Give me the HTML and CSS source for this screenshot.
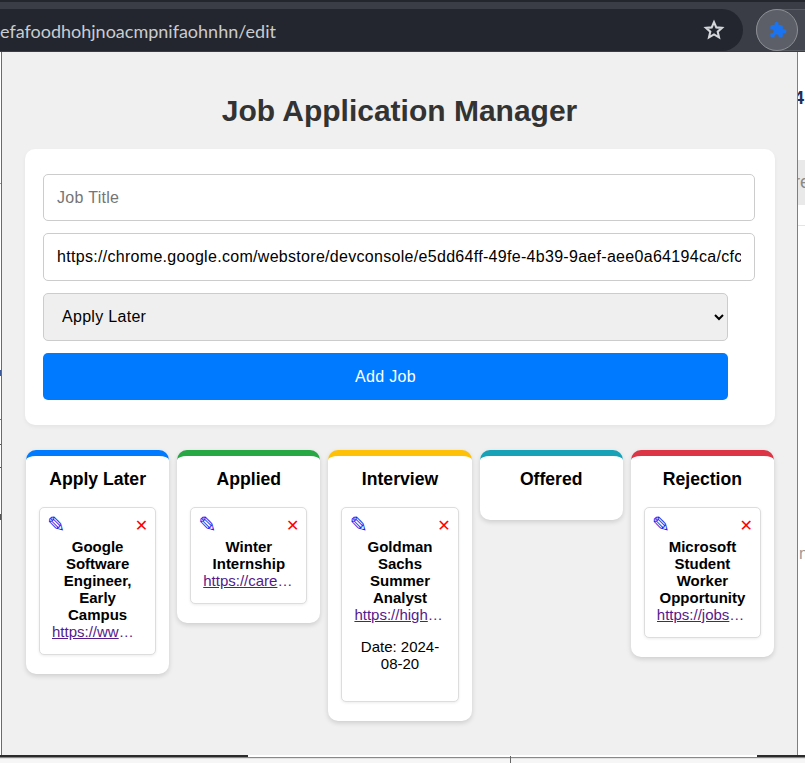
FILE: index.html
```html
<!DOCTYPE html>
<html lang="en">
<head>
<meta charset="utf-8">
<title>Job Application Manager</title>
<link rel="stylesheet" href="styles.css">
</head>
<body>
<header class="browser">
  <div class="tabstrip"></div>
  <div class="toolbar">
    <div class="omnibox">
      <span class="url">efafoodhohjnoacmpnifaohnhn/edit</span>
      <svg class="star" viewBox="0 0 24 24" width="24" height="24"><path d="M12 4.200l2.300 5.200 5.700.5-4.300 3.800 1.300 5.600L12 16.400l-5 2.900 1.300-5.600L4 9.900l5.700-.5z" fill="none" stroke="#d4d6da" stroke-width="2.100"/></svg>
    </div>
    <div class="ext-pill">
      <div class="ext-button">
        <svg viewBox="0 0 24 24" width="20" height="20"><path d="M21 11h-2V8a2 2 0 0 0-2-2h-3V4.500a2.500 2.500 0 0 0-5 0V6H6a2 2 0 0 0-2 2v3h1.500a2.500 2.500 0 0 1 0 5H4v3a2 2 0 0 0 2 2h3v-1.500a2.500 2.500 0 0 1 5 0V21h3a2 2 0 0 0 2-2v-3h2a2.500 2.500 0 0 0 0-5z" fill="#1a73f0"/></svg>
      </div>
    </div>
  </div>
</header>
<div class="page-bg">
  <div class="bg-left"></div>
  <span class="bg-four">4</span>
  <div class="bg-bar">re</div>
  <div class="bg-sep"></div>
  <span class="bg-n">n</span>
  <div class="bg-dark bg-dark-left"></div>
  <div class="bg-dark bg-dark-right"></div>
  <div class="bg-bottom"></div>
  <div class="bg-tick"></div>
</div>
<main class="popup">
  <h1 class="title">Job Application Manager</h1>
  <form class="form-card">
    <input class="field" type="text" placeholder="Job Title">
    <input class="field" type="text" value="https://chrome.google.com/webstore/devconsole/e5dd64ff-49fe-4b39-9aef-aee0a64194ca/cfcefafoodhohjnoacmpnifaohnhn/edit">
    <select class="status">
      <option>Apply Later</option>
      <option>Applied</option>
      <option>Interview</option>
      <option>Offered</option>
      <option>Rejection</option>
    </select>
    <button class="add" type="button">Add Job</button>
  </form>
  <section class="board">
    <div class="column later">
      <h2>Apply Later</h2>
      <article class="job">
        <div class="job-actions"><span class="edit">✎</span><span class="remove">✕</span></div>
        <strong>Google Software Engineer, Early Campus</strong>
        <a class="link" href="#">https://www.google.com/careers</a>
      </article>
    </div>
    <div class="column applied">
      <h2>Applied</h2>
      <article class="job">
        <div class="job-actions"><span class="edit">✎</span><span class="remove">✕</span></div>
        <strong>Winter Internship</strong>
        <a class="link" href="#">https://careers.example.com/winter</a>
      </article>
    </div>
    <div class="column interview">
      <h2>Interview</h2>
      <article class="job">
        <div class="job-actions"><span class="edit">✎</span><span class="remove">✕</span></div>
        <strong>Goldman Sachs Summer Analyst</strong>
        <a class="link" href="#">https://higher.gs.com/roles/summer</a>
        <p class="date">Date: 2024-08-20</p>
      </article>
    </div>
    <div class="column offered">
      <h2>Offered</h2>
    </div>
    <div class="column rejection">
      <h2>Rejection</h2>
      <article class="job">
        <div class="job-actions"><span class="edit">✎</span><span class="remove">✕</span></div>
        <strong>Microsoft Student Worker Opportunity</strong>
        <a class="link" href="#">https://jobs.careers.microsoft.com</a>
      </article>
    </div>
  </section>
</main>
</body>
</html>
```
FILE: styles.css
```css
* { box-sizing: border-box; }
html, body { margin: 0; height: 100%; }
body {
  position: relative;
  width: 805px;
  height: 763px;
  overflow: hidden;
  background: #fff;
  font-family: "Liberation Sans", Arial, sans-serif;
  color: #000;
}
.browser { background: #3a3d45; height: 52px; }
.tabstrip { height: 9px; background: #3a3d45; border-top: 2px solid #23262d; }
.toolbar { display: flex; align-items: flex-start; height: 43px; }
.omnibox {
  flex: none;
  width: 743px;
  height: 42px;
  display: flex;
  align-items: center;
  justify-content: space-between;
  padding-right: 17px;
  background: #23262e;
  border-radius: 0 21px 21px 0;
}
.url {
  position: relative;
  top: 1px;
  font-family: "Lato", "Noto Sans", sans-serif;
  font-size: 18px;
  color: #c9ccd0;
  white-space: nowrap;
}
.star { display: block; }
.ext-pill {
  flex: 1;
  height: 42px;
  margin-left: 13px;
  background: #44474f;
  border: 1px solid #595c63;
  border-right: 0;
  border-radius: 21px 0 0 21px;
}
.ext-button {
  width: 42px;
  height: 42px;
  margin: -1px 0 0 -1px;
  border-radius: 50%;
  background: #5c5f68;
  border: 1px solid #8d8f94;
  display: flex;
  align-items: center;
  justify-content: center;
}
.page-bg {
  position: absolute;
  inset: 52px 0 0 0;
  background: #fff;
}
.bg-left {
  position: absolute;
  left: 0;
  top: 0;
  width: 1px;
  height: 704px;
  background: linear-gradient(to bottom,
    #fff 0 131px, #999 131px 132px, #fff 132px 318px,
    #3b5a9a 318px 324px, #fff 324px 367px,
    #777 367px 368px, #fff 368px 392px,
    #555 392px 393px, #fff 393px 415px,
    #555 415px 416px, #fff 416px 462px,
    #555 462px 468px, #fff 468px 704px);
}
.bg-four {
  position: absolute;
  left: 794px;
  top: 36px;
  font-size: 18px;
  line-height: 20px;
  font-weight: 700;
  color: #1c2f5a;
}
.bg-bar {
  position: absolute;
  left: 797px;
  top: 108px;
  width: 8px;
  height: 45px;
  line-height: 45px;
  background: #e9e9e9;
  color: #8a8a8a;
  font-size: 18px;
  overflow: hidden;
  text-indent: -3px;
}
.bg-sep {
  position: absolute;
  left: 797px;
  top: 173px;
  width: 8px;
  height: 1px;
  background: #e4e4e4;
}
.bg-n {
  position: absolute;
  left: 799px;
  top: 493px;
  font-size: 16px;
  color: #999;
}
.bg-dark {
  position: absolute;
  top: 703px;
  height: 2px;
  background: #2b2b2b;
}
.bg-dark-left { left: 0; width: 248px; }
.bg-dark-right { left: 757px; width: 48px; }
.bg-bottom {
  position: absolute;
  left: 0;
  top: 705px;
  width: 100%;
  height: 6px;
  background: linear-gradient(to bottom, #888 0 1px, #e2e2e2 1px 2px, #f6f6f6 2px);
}
.bg-tick {
  position: absolute;
  left: 510px;
  top: 704px;
  width: 1px;
  height: 7px;
  background: #666;
}
.popup {
  position: absolute;
  left: 1px;
  top: 52px;
  width: 797px;
  height: 703px;
  padding: 25px 23px 0;
  background: #f0f0f0;
  border-left: 1px solid #6b6b6b;
  border-right: 1px solid #7f7f7f;
}
.title {
  margin: 17px 0 21px;
  font-size: 30px;
  line-height: 34px;
  font-weight: 700;
  text-align: center;
  color: #333;
}
.form-card {
  display: flex;
  flex-direction: column;
  align-items: flex-start;
  gap: 12px;
  width: 750px;
  height: 276px;
  padding: 25px 20px 0 18px;
  background: #fff;
  border-radius: 10px;
  box-shadow: 0 2px 4px rgba(0,0,0,.05);
}
.field {
  width: 712px;
  height: 47.33px;
  padding: 0 13px;
  border: 1px solid #ccc;
  border-radius: 5px;
  background: #fff;
  color: #000;
  font: 16px "Liberation Sans", Arial, sans-serif;
  letter-spacing: .3px;
}
.field::placeholder { color: #757575; }
.status {
  width: 685px;
  height: 48px;
  padding: 0 14px;
  border: 1px solid #ccc;
  border-radius: 5px;
  background-color: #efefef;
  color: #000;
  font: 16px "Liberation Sans", Arial, sans-serif;
  letter-spacing: .3px;
}
.add {
  width: 685px;
  height: 47px;
  padding: 2px 0 0;
  border: 0;
  border-radius: 5px;
  background: #007bff;
  color: #fff;
  font: 16px "Liberation Sans", Arial, sans-serif;
  letter-spacing: .3px;
}
.board {
  display: flex;
  align-items: flex-start;
  gap: 8px;
  width: 750px;
  margin-top: 25px;
  padding: 0 1px;
}
.column {
  flex: 1 1 0;
  min-width: 0;
  padding: 0 13px 19px;
  background: #fff;
  border-top: 6px solid #007bff;
  border-radius: 10px;
  box-shadow: 0 2px 5px rgba(0,0,0,.15);
}
.column.applied { border-top-color: #28a745; }
.column.interview { border-top-color: #ffc107; }
.column.offered { border-top-color: #17a2b8; padding-bottom: 13px; }
.column.rejection { border-top-color: #dc3545; }
.column h2 {
  margin: 13px 0 18px;
  font-size: 17.6px;
  line-height: 20px;
  font-weight: 700;
  text-align: center;
}
.job {
  padding: 7px 12px 14px;
  background: #fff;
  border: 1px solid #ddd;
  border-radius: 5px;
  box-shadow: 0 1px 3px rgba(0,0,0,.08);
  text-align: center;
  font-size: 15px;
  line-height: 17px;
}
.job-actions {
  display: flex;
  justify-content: space-between;
  align-items: flex-start;
  height: 23px;
  margin: 0 -5px 0 -5px;
}
.edit {
  font-family: "DejaVu Sans", sans-serif;
  font-size: 22px;
  line-height: 20px;
  color: #2222ee;
}
.remove {
  font-family: "DejaVu Sans", sans-serif;
  font-size: 16px;
  line-height: 16px;
  color: #f00;
  margin-top: 3px;
}
.job strong { display: block; font-weight: 700; }
.link {
  display: block;
  overflow: hidden;
  white-space: nowrap;
  text-overflow: ellipsis;
  color: #551a8b;
}
.date { margin: 15px 0 15px; }
```
